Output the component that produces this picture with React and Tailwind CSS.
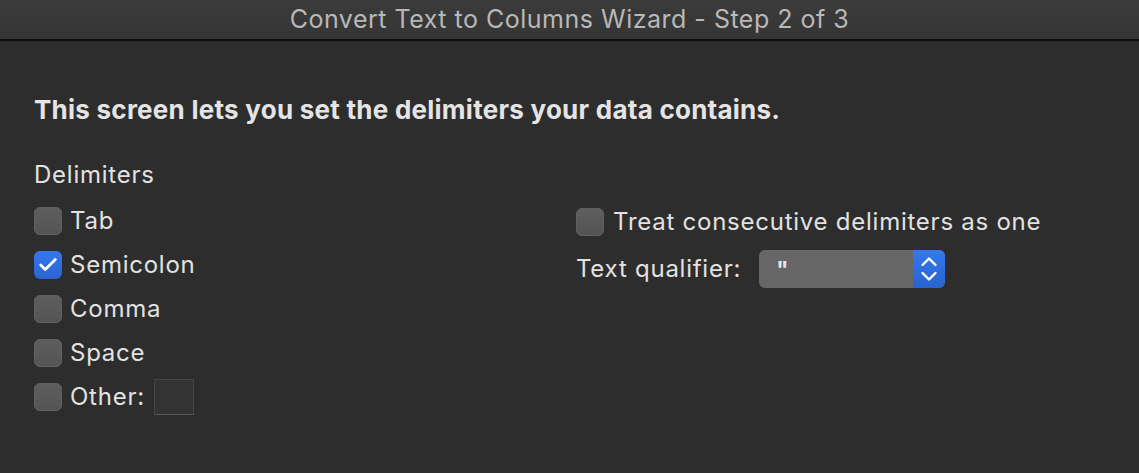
import { Check } from 'lucide-react';

const font = { fontFamily: 'Inter, "Noto Sans", sans-serif' };

function Box({ checked }) {
  if (checked) {
    return (
      <div className="w-[28px] h-[28px] rounded-[6px] bg-gradient-to-b from-[#3478f0] to-[#2a63cf] grid place-items-center shrink-0">
        <Check size={22} strokeWidth={3} className="text-white" />
      </div>
    );
  }
  return (
    <div className="w-[28px] h-[28px] rounded-[6px] bg-gradient-to-b from-[#5e5e5e] to-[#545454] border border-[#626262] shrink-0" />
  );
}

function Row({ label, checked, children }) {
  return (
    <div className="flex items-center h-[44px]">
      <Box checked={checked} />
      <span className="ml-[8px] text-[24px] tracking-[0.75px] text-[#e2e2e2]">{label}</span>
      {children}
    </div>
  );
}

export default function App() {
  return (
    <div className="w-[1139px] h-[473px] bg-[#2d2d2d] overflow-hidden" style={font}>
      <div className="h-[41px] bg-gradient-to-b from-[#3b3b3b] to-[#353535] border-b-2 border-[#0e0e0e] flex items-center justify-center">
        <span className="text-[25px] text-[#b8b8b8] tracking-[0.5px]">Convert Text to Columns Wizard - Step 2 of 3</span>
      </div>

      <div className="pl-[34px] pt-[53px]">
        <div className="text-[26px] font-bold tracking-[0.25px] text-[#e4e4e4] leading-[32px]">
          This screen lets you set the delimiters your data contains.
        </div>

        <div className="flex mt-[34px]">
          <div className="w-[542px]">
            <div className="text-[24px] tracking-[0.75px] text-[#e2e2e2] leading-[30px]">Delimiters</div>
            <div className="mt-[9px]">
              <Row label="Tab" />
              <Row label="Semicolon" checked />
              <Row label="Comma" />
              <Row label="Space" />
              <Row label="Other:">
                <div className="ml-[9px] w-[40px] h-[36px] bg-[#333333] border border-[#454545] border-b-[#5a5a5a]" />
              </Row>
            </div>
          </div>

          <div className="pt-[40px]">
            <div className="flex items-center h-[44px]">
              <Box />
              <span className="ml-[9px] text-[24px] tracking-[0.75px] text-[#e2e2e2]">Treat consecutive delimiters as one</span>
            </div>
            <div className="flex items-center h-[50px]">
              <span className="text-[24px] tracking-[0.75px] text-[#e2e2e2]">Text qualifier:</span>
              <div className="ml-[18px] w-[186px] h-[38px] rounded-[6px] bg-[#666666] flex overflow-hidden">
                <span className="flex-1 pl-[17px] text-[22px] font-bold text-[#e8e8e8] leading-[38px]">"</span>
                <div className="w-[32px] bg-gradient-to-b from-[#3478f0] to-[#2a63cf]">
                  <svg width="32" height="38" viewBox="0 0 32 38" fill="none" stroke="white" strokeWidth="2.4" strokeLinecap="round" strokeLinejoin="round">
                    <path d="M9.5 15 L16 8.5 L22.5 15" />
                    <path d="M9.5 23 L16 29.5 L22.5 23" />
                  </svg>
                </div>
              </div>
            </div>
          </div>
        </div>
      </div>
    </div>
  );
}
